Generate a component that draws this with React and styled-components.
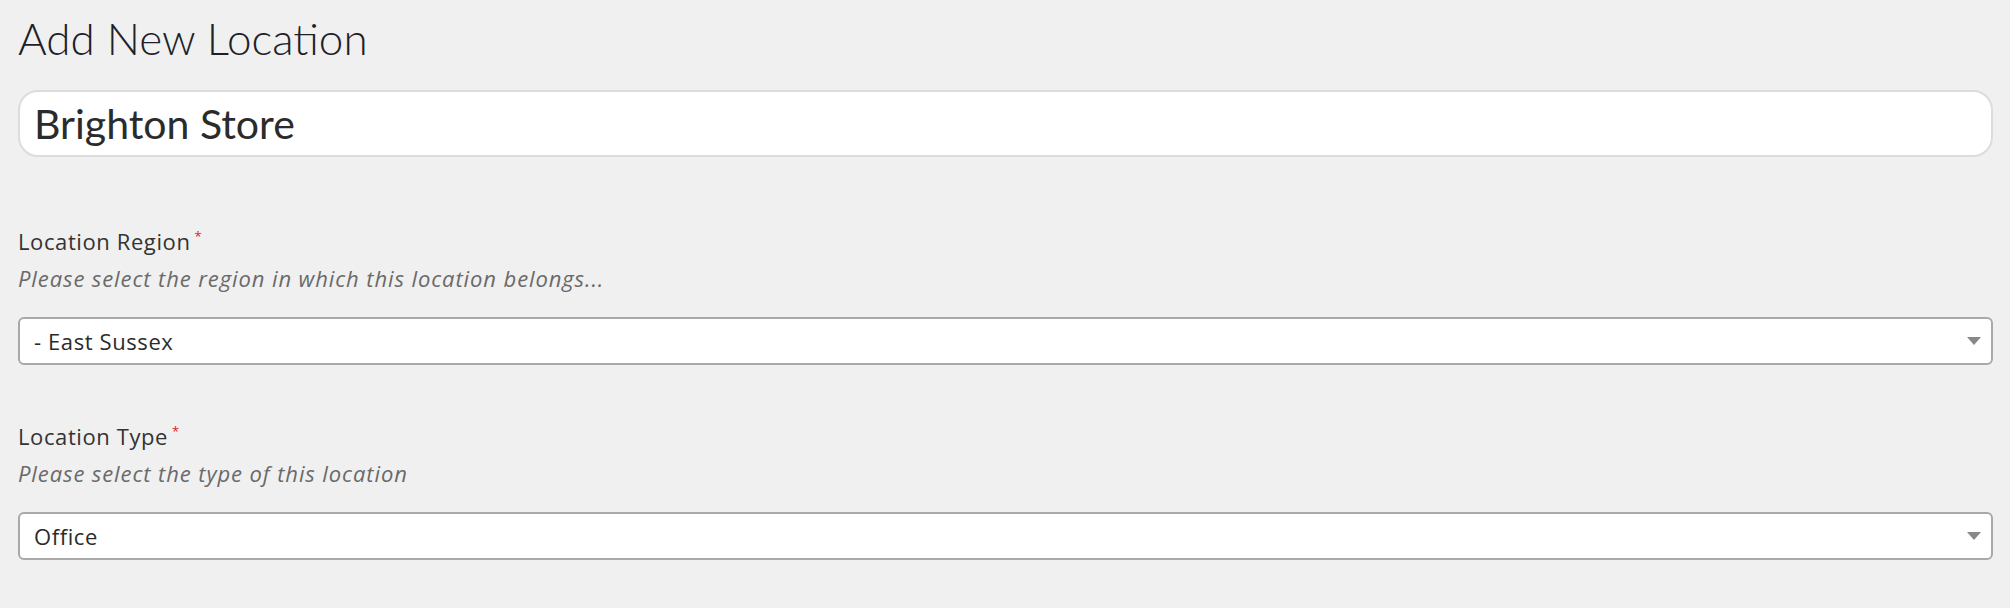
import React from 'react';
import styled, { createGlobalStyle } from 'styled-components';

const GlobalStyle = createGlobalStyle`
  body {
    margin: 0;
    background: #f0f0f0;
    font-family: "Open Sans", Lato, sans-serif;
    color: #2b2b2b;
  }
`;

const Page = styled.div`
  padding: 10px 17px 0 18px;
`;

const Title = styled.h1`
  margin: 0;
  font-family: Lato, sans-serif;
  font-size: 44px;
  font-weight: 300;
  line-height: 56px;
  color: #1f1f2a;
`;

const NameInput = styled.input`
  display: block;
  box-sizing: border-box;
  width: 100%;
  height: 67px;
  margin-top: 24px;
  padding: 0 14px;
  border: 2px solid #dcdcdc;
  border-radius: 20px;
  background: #fff;
  font-family: Lato, sans-serif;
  font-size: 41px;
  color: #2b2b2b;
  outline: none;
`;

const Field = styled.div`
  margin-top: ${(p) => p.$top}px;
`;

const Label = styled.div`
  font-size: 22px;
  line-height: 28px;
  letter-spacing: 0.6px;
  color: #333;
`;

const Required = styled.span`
  color: #e01818;
  font-size: 13px;
  vertical-align: top;
  margin-left: 4px;
  line-height: 18px;
`;

const Hint = styled.div`
  margin-top: 9px;
  font-size: 22px;
  font-style: italic;
  line-height: 28px;
  letter-spacing: 0.9px;
  color: #6a6a6a;
`;

const SelectBox = styled.div`
  display: flex;
  align-items: center;
  justify-content: space-between;
  box-sizing: border-box;
  height: 48px;
  margin-top: 25px;
  padding: 0 10px 0 14px;
  border: 2px solid #a9a9a9;
  border-radius: 6px;
  background: #fff;
  font-size: 22px;
  letter-spacing: 0.6px;
  color: #2b2b2b;
`;

const Caret = styled.span`
  width: 0;
  height: 0;
  border-left: 7px solid transparent;
  border-right: 7px solid transparent;
  border-top: 8px solid #888;
`;

function SelectField({ label, hint, value, top }) {
  return (
    <Field $top={top}>
      <Label>
        {label}
        <Required>*</Required>
      </Label>
      <Hint>{hint}</Hint>
      <SelectBox>
        <span>{value}</span>
        <Caret />
      </SelectBox>
    </Field>
  );
}

export default function App() {
  return (
    <Page>
      <GlobalStyle />
      <Title>Add New Location</Title>
      <NameInput defaultValue="Brighton Store" />
      <SelectField
        top={70}
        label="Location Region"
        hint="Please select the region in which this location belongs..."
        value="- East Sussex"
      />
      <SelectField
        top={57}
        label="Location Type"
        hint="Please select the type of this location"
        value="Office"
      />
    </Page>
  );
}
